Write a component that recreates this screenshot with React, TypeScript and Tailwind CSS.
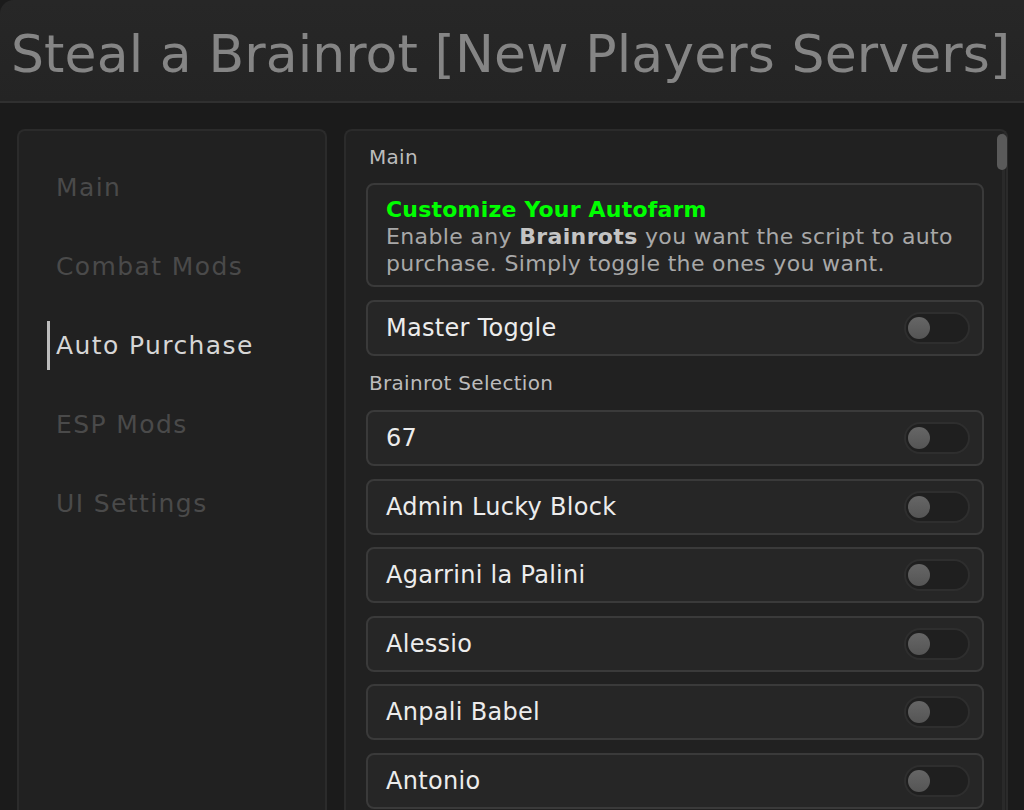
import React from 'react';

const navItems = ['Main', 'Combat Mods', 'Auto Purchase', 'ESP Mods', 'UI Settings'];
const brainrots = ['67', 'Admin Lucky Block', 'Agarrini la Palini', 'Alessio', 'Anpali Babel', 'Antonio'];

const Toggle: React.FC = () => (
  <div className="w-[66px] h-[32px] rounded-full bg-[#1f1f1f] border-2 border-[#2e2e2e] flex items-center px-[2px]">
    <div className="w-[22px] h-[22px] rounded-full bg-gradient-to-b from-[#666] to-[#555]" />
  </div>
);

const Row: React.FC<{ label: string }> = ({ label }) => (
  <div className="h-[56px] shrink-0 rounded-[8px] border-2 border-[#3a3a3a] bg-[#262626] flex items-center justify-between pl-[18px] pr-[12px]">
    <span className="text-[24px] tracking-[0.3px] text-[#ececec]">{label}</span>
    <Toggle />
  </div>
);

export default function App() {
  return (
    <div className="w-[1024px] h-[810px] overflow-hidden bg-[#1b1b1b] flex flex-col font-['DejaVu_Sans','Noto_Sans',sans-serif]">
      <header className="h-[103px] shrink-0 bg-gradient-to-b from-[#272727] to-[#242424] border-b-2 border-[#303030] rounded-tl-[14px] flex items-center pl-[11px] pt-[6px]">
        <h1 className="text-[52px] tracking-[0.1px] text-[#858585] whitespace-nowrap leading-none">
          Steal a Brainrot [New Players Servers]
        </h1>
      </header>

      <div className="flex flex-1 min-h-0 pt-[26px] pl-[17px] gap-[17px]">
        <nav className="w-[310px] shrink-0 rounded-t-[8px] border-2 border-b-0 border-[#2b2b2b] bg-[#212121] flex flex-col pt-[44px] gap-[54px]">
          {navItems.map((item) => {
            const active = item === 'Auto Purchase';
            return (
              <div key={item} className="relative h-[25px] flex items-center pl-[37px]">
                {active && <div className="absolute left-[28px] top-[-12px] w-[3px] h-[49px] bg-[#bdbdbd]" />}
                <span className={`text-[25px] tracking-[1.4px] whitespace-nowrap ${active ? 'text-[#d6d6d6]' : 'text-[#4a4a4a]'}`}>{item}</span>
              </div>
            );
          })}
        </nav>

        <main className="relative w-[664px] shrink-0 rounded-t-[8px] border-2 border-b-0 border-[#2b2b2b] bg-[#212121] pl-[20px] pr-[22px] pt-[13px] flex flex-col">
          <div className="absolute right-[1px] top-[2px] bottom-0 w-[3px] bg-[#2a2a2a]" />
          <div className="absolute right-[-1px] top-[3px] w-[10px] h-[36px] rounded-full bg-[#5a5a5a]" />

          <div className="h-[26px] flex items-center text-[20px] tracking-[0.3px] text-[#bcbcbc] pl-[3px]">Main</div>

          <div className="mt-[13px] h-[104px] shrink-0 rounded-[8px] border-2 border-[#3a3a3a] bg-[#242424] pl-[18px] pr-[6px] pt-[11px]">
            <div className="text-[22px] leading-[27px] tracking-[0.2px] font-bold text-[#00ff00]">Customize Your Autofarm</div>
            <p className="text-[22px] leading-[27px] tracking-[0.35px] text-[#a8a8a8]">
              Enable any <b className="text-[#c4c4c4]">Brainrots</b> you want the script to auto purchase. Simply toggle the ones you want.
            </p>
          </div>

          <div className="mt-[13px]">
            <Row label="Master Toggle" />
          </div>

          <div className="mt-[14px] h-[26px] flex items-center text-[20px] tracking-[0.3px] text-[#bcbcbc] pl-[3px]">Brainrot Selection</div>

          <div className="mt-[14px] flex flex-col gap-[12.5px]">
            {brainrots.map((b) => (
              <Row key={b} label={b} />
            ))}
          </div>
        </main>
      </div>
    </div>
  );
}
